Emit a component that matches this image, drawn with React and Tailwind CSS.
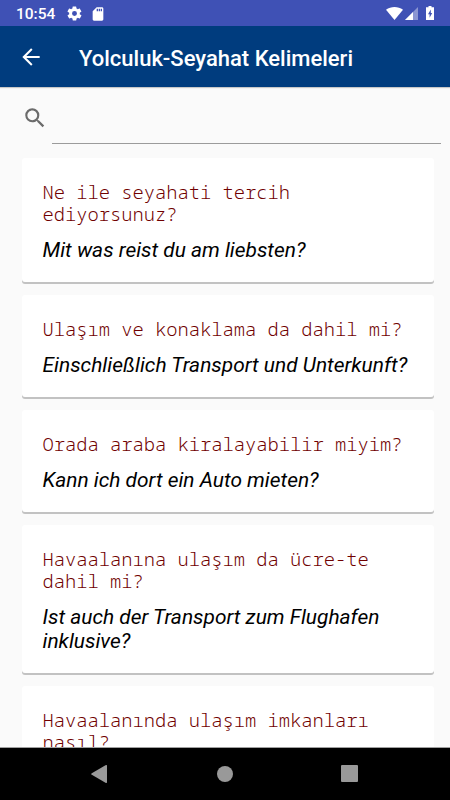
import { useState } from 'react';

const phrases = [
  { tr: 'Ne ile seyahati tercih ediyorsunuz?', de: 'Mit was reist du am liebsten?' },
  { tr: 'Ulaşım ve konaklama da dahil mi?', de: 'Einschließlich Transport und Unterkunft?' },
  { tr: 'Orada araba kiralayabilir miyim?', de: 'Kann ich dort ein Auto mieten?' },
  { tr: 'Havaalanına ulaşım da ücre-te dahil mi?', de: 'Ist auch der Transport zum Flughafen inklusive?' },
  { tr: 'Havaalanında ulaşım imkanları nasıl?', de: '' },
];

const StatusBar = () => (
  <div className="flex h-[26px] shrink-0 items-center bg-[#3f51b5] pt-px pr-4 pl-4 text-white">
    <span className="w-[50px] pt-[2px] text-[15.500px] leading-none font-medium">10:54</span>
    <svg viewBox="0 0 24 24" className="h-[17px] w-[17px]" fill="currentColor">
      <path d="M19.4 13c0-.3.1-.6.1-1s0-.7-.1-1l2.1-1.600c.2-.2.3-.4.1-.7l-2-3.400c-.1-.3-.4-.3-.6-.3l-2.500 1a7 7 0 0 0-1.700-1l-.4-2.600a.5.5 0 0 0-.5-.4h-4c-.2 0-.4.2-.5.4l-.4 2.600c-.6.3-1.200.6-1.700 1l-2.500-1c-.2 0-.5 0-.6.300l-2 3.400c-.1.3 0 .5.1.7L4.500 11a8 8 0 0 0 0 2l-2.100 1.600c-.2.2-.3.4-.1.7l2 3.400c.1.3.4.3.6.3l2.500-1c.5.4 1.100.7 1.700 1l.4 2.600c0 .2.2.4.5.4h4c.2 0 .4-.2.500-.4l.4-2.600c.6-.3 1.200-.6 1.700-1l2.500 1c.2 0 .5 0 .6-.3l2-3.400c.1-.3 0-.5-.1-.7L19.400 13zM12 15.500a3.500 3.500 0 1 1 0-7 3.500 3.500 0 0 1 0 7z" />
    </svg>
    <svg viewBox="0 0 24 24" className="ml-[7px] h-4 w-4" fill="currentColor">
      <path d="M18 2h-8L4 8v12c0 1.100.9 2 2 2h12c1.100 0 2-.9 2-2V4c0-1.100-.9-2-2-2zm-6 6h-2V4h2v4zm3 0h-2V4h2v4zm3 0h-2V4h2v4z" />
    </svg>
    <div className="ml-auto flex items-center pb-px">
      <svg viewBox="0 0 17 13" className="h-[13px] w-[17px]" fill="currentColor">
        <path d="M0 2.700C5-.9 12-.9 17 2.700L8.500 13z" />
      </svg>
      <svg viewBox="0 0 13 13" className="ml-[2px] h-[13px] w-[13px]" fill="currentColor">
        <path d="M13 0v13H0z" opacity=".4" />
        <path d="M8 5v8H0z" />
      </svg>
      <svg viewBox="0 0 8 14" className="ml-2 h-[14px] w-2" fill="currentColor">
        <path d="M2.500 0h3v1.300H8V14H0V1.300h2.500z" />
        <path d="M4.800 3.500 2 8.300h1.600v3.500L6.200 7H4.800z" fill="#3f51b5" />
      </svg>
    </div>
  </div>
);

const Header = () => (
  <header className="z-10 flex h-[61px] shrink-0 items-center bg-[#003c7e] text-white shadow-[0_1px_1px_rgba(0,0,0,0.2)]">
    <button type="button" aria-label="Geri" className="ml-[18px] w-[61px]">
      <svg viewBox="0 0 24 24" className="h-[26px] w-[26px]" fill="currentColor">
        <path d="M20 11.100H7.700l5.700-5.750L12.100 4l-8.100 8 8.100 8 1.300-1.350L7.700 12.900H20z" />
      </svg>
    </button>
    <h1 className="pt-[3px] text-[22px] font-medium whitespace-nowrap">Yolculuk-Seyahat Kelimeleri</h1>
  </header>
);

const PhraseCard = ({ phrase }) => (
  <div className="rounded-[3px] bg-white px-[21px] pt-[23px] pb-5 shadow-[0_2px_0_#c2c2c2]">
    <p className="font-['Noto_Sans_Mono','DejaVu_Sans_Mono',monospace] text-[18.75px] leading-[22px] font-[360] text-[#700000]">
      {phrase.tr}
    </p>
    <p className="mt-[13px] text-[20.9px] leading-6 text-black italic">{phrase.de}</p>
  </div>
);

export default function App() {
  const [query, setQuery] = useState('');

  const filtered = phrases.filter((p) =>
    (p.tr + ' ' + p.de).toLowerCase().includes(query.toLowerCase())
  );

  return (
    <div className="flex h-[800px] w-[450px] flex-col overflow-hidden bg-[#fafafa] font-['Roboto',sans-serif]">
      <StatusBar />
      <Header />

      <main className="min-h-0 flex-1 overflow-hidden">
        <div className="flex h-[57px] pr-[9px] pl-[22px]">
          <svg viewBox="0 0 24 24" className="mt-[18px] h-[26px] w-[26px]" fill="#6b6b6b">
            <path d="M15.500 14h-.79l-.28-.27A6.470 6.470 0 0 0 16 9.500 6.500 6.500 0 1 0 9.500 16c1.610 0 3.090-.59 4.230-1.570l.27.28v.79l5 4.990L20.490 19l-4.990-5zm-6 0C7.010 14 5 11.990 5 9.500S7.010 5 9.500 5 14 7.010 14 9.500 11.990 14 9.500 14z" />
          </svg>
          <input
            type="text"
            value={query}
            onChange={(e) => setQuery(e.target.value)}
            className="ml-1 flex-1 border-b border-[#9b9b9b] bg-transparent text-lg outline-none"
          />
        </div>

        <div className="mt-[14px] flex flex-col gap-[13px] pr-4 pl-[21.5px]">
          {filtered.map((phrase) => (
            <PhraseCard key={phrase.tr} phrase={phrase} />
          ))}
        </div>
      </main>

      <nav className="flex h-[53px] shrink-0 items-center justify-between border-t border-[#a0a0a0] bg-black pr-[92px] pb-px pl-[91px]">
        <svg viewBox="0 0 16 18" className="h-[18px] w-4" fill="#999">
          <path d="M14.500.2Q16-.5 16 1v16q0 1.500-1.500.8L.8 9.800Q-.5 9 .8 8.200z" />
        </svg>
        <div className="ml-px h-4 w-4 rounded-full bg-[#999]"></div>
        <div className="h-[17px] w-[17px] rounded-[1px] bg-[#999]"></div>
      </nav>
    </div>
  );
}
